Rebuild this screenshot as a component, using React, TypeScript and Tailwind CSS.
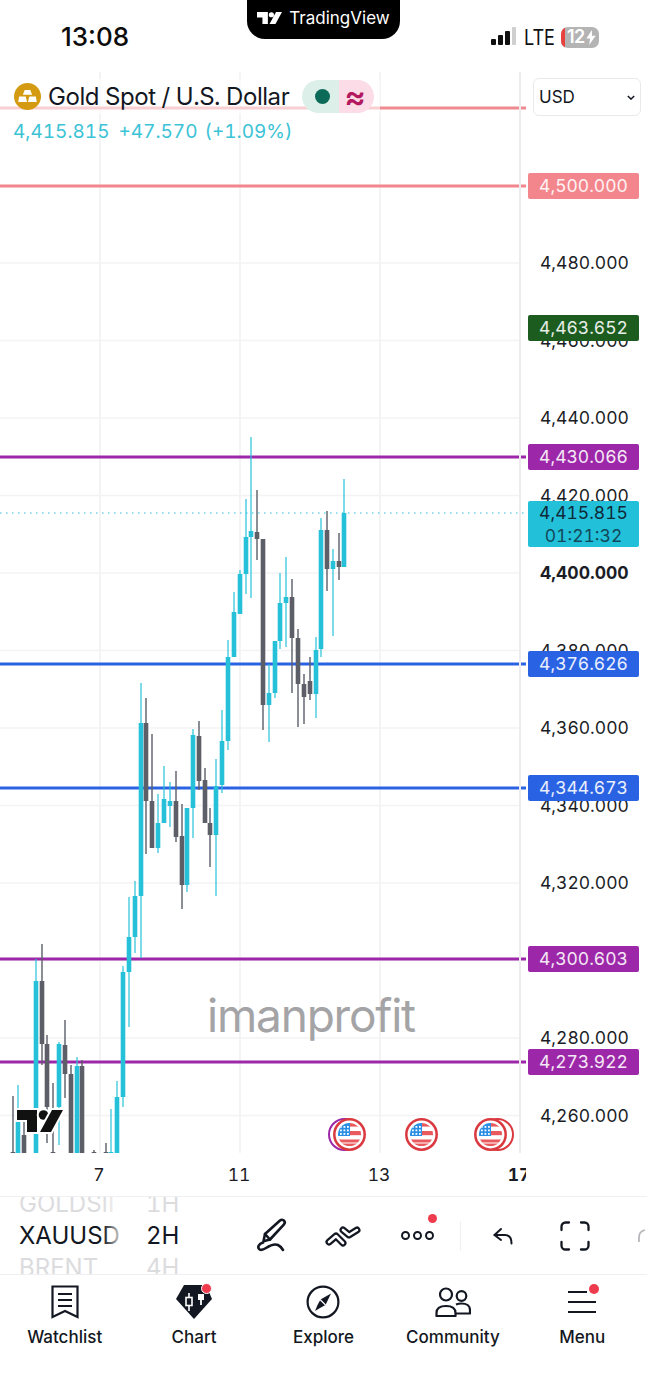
import type { ReactNode } from "react";

const FONT = { fontFamily: "Inter, 'Liberation Sans', sans-serif" };
const UP = "#26c1d9";
const DOWN = "#5c5e68";

// price -> page y, read off the axis labels
const priceY = (price: number) => 573 + (4400 - price) * 3.875;

// x, wick top, wick bottom, body top, body bottom, up?
const candles: [number, number, number, number, number, boolean][] = [
  [13, 1096, 1153, 1152, 1153, false],
  [18, 1085, 1153, 1122, 1153, true],
  [24, 1122, 1153, 1135, 1153, false],
  [36, 959, 1153, 981, 1153, true],
  [42, 944, 1065, 981, 1044, false],
  [47, 1035, 1143, 1044, 1107, false],
  [53, 1083, 1153, 1152, 1153, false],
  [59, 1042, 1145, 1044, 1107, true],
  [65, 1020, 1098, 1045, 1074, false],
  [71, 1065, 1153, 1074, 1153, false],
  [77, 1057, 1153, 1066, 1153, true],
  [82, 1060, 1153, 1066, 1153, false],
  [94, 1150, 1153, 1152, 1153, false],
  [106, 1143, 1153, 1152, 1153, false],
  [111, 1109, 1153, 1152, 1153, true],
  [117, 1081, 1153, 1097, 1153, true],
  [123, 966, 1107, 972, 1097, true],
  [129, 897, 1027, 937, 972, true],
  [135, 881, 953, 896, 937, true],
  [141, 683, 958, 723, 896, true],
  [146, 698, 854, 723, 801, false],
  [152, 734, 848, 801, 848, false],
  [158, 794, 853, 823, 848, true],
  [164, 766, 823, 799, 823, true],
  [170, 782, 827, 801, 806, true],
  [176, 771, 842, 801, 837, false],
  [182, 804, 909, 836, 885, false],
  [187, 808, 892, 808, 885, true],
  [193, 729, 838, 735, 808, true],
  [199, 721, 790, 736, 781, false],
  [205, 768, 823, 780, 823, false],
  [210, 808, 867, 823, 835, false],
  [216, 759, 896, 786, 835, true],
  [222, 710, 793, 741, 785, true],
  [228, 640, 750, 657, 741, true],
  [234, 592, 657, 612, 657, true],
  [240, 570, 614, 574, 614, true],
  [246, 499, 594, 537, 574, true],
  [251, 437, 598, 531, 537, true],
  [257, 490, 560, 532, 539, false],
  [263, 539, 730, 539, 705, false],
  [269, 664, 742, 693, 705, true],
  [275, 641, 698, 641, 693, true],
  [280, 573, 649, 603, 641, true],
  [286, 557, 647, 597, 603, true],
  [292, 579, 693, 597, 638, false],
  [298, 629, 727, 638, 684, false],
  [304, 674, 724, 684, 697, false],
  [310, 657, 700, 681, 694, false],
  [316, 637, 718, 650, 694, true],
  [321, 518, 657, 530, 649, true],
  [327, 511, 591, 530, 569, false],
  [333, 549, 636, 561, 569, true],
  [339, 533, 580, 561, 567, false],
  [344, 479, 567, 513, 567, true],
];

const levels = [
  { y: 186, color: "#f3868c" },
  { y: 457, color: "#9c27a8" },
  { y: 664, color: "#2a62e4" },
  { y: 788, color: "#2a62e4" },
  { y: 959, color: "#9c27a8" },
  { y: 1062, color: "#9c27a8" },
];

const axisPrices = [4480, 4460, 4440, 4420, 4400, 4380, 4360, 4340, 4320, 4280, 4260];

const tags = [
  { y: 186, text: "4,500.000", bg: "#f3868c" },
  { y: 328, text: "4,463.652", bg: "#1c5c1f" },
  { y: 457, text: "4,430.066", bg: "#9c27a8" },
  { y: 664, text: "4,376.626", bg: "#2a62e4" },
  { y: 788, text: "4,344.673", bg: "#2a62e4" },
  { y: 959, text: "4,300.603", bg: "#9c27a8" },
  { y: 1062, text: "4,273.922", bg: "#9c27a8" },
];

function Chart() {
  return (
    <svg width="526" height="1083" viewBox="0 70 526 1083" className="block">
      {[100, 240, 380].map((x) => (
        <line key={x} x1={x} x2={x} y1={72} y2={1153} stroke="#f1f1f2" strokeWidth="1.5" />
      ))}
      {axisPrices.concat(4500, 4300).map((p) => (
        <line key={p} x1={0} x2={520} y1={priceY(p)} y2={priceY(p)} stroke="#f3f3f4" strokeWidth="1.5" />
      ))}
      <line x1={0} x2={526} y1={513} y2={513} stroke={UP} strokeWidth="1.2" strokeDasharray="1.5 4.5" />
      {levels.map((l) => (
        <line key={l.y} x1={0} x2={526} y1={l.y} y2={l.y} stroke={l.color} strokeWidth="3" />
      ))}
      <line x1={0} x2={526} y1={108} y2={108} stroke="#ee8a90" strokeWidth="3" />
      {candles.map(([x, wt, wb, bt, bb, up]) => (
        <g key={x} fill={up ? UP : DOWN}>
          <rect x={x - 0.7} y={wt} width={1.4} height={wb - wt} opacity={up ? 0.85 : 1} />
          <rect x={x - 2.3} y={bt} width={4.6} height={bb - bt} />
        </g>
      ))}
    </svg>
  );
}

function TvLogo({ className, fill, halo }: { className: string; fill: string; halo?: boolean }) {
  return (
    <svg
      viewBox="0 0 46 22"
      className={`overflow-visible ${className}`}
      fill={fill}
      stroke={halo ? "#fff" : "none"}
      strokeWidth={halo ? 4 : 0}
      paintOrder="stroke"
    >
      <path d="M0 0H20V22H10V10H0Z" />
      <circle cx="26.5" cy="5" r="4.8" />
      <path d="M35 0H46L34 22H23Z" />
    </svg>
  );
}

function FlagBadge({ ring }: { ring?: "left" | "right" }) {
  return (
    <div className="relative h-[33px] w-[33px]">
      {ring === "left" && (
        <div className="absolute -left-[5px] top-0 h-[33px] w-[33px] rounded-full border-[2.5px] border-[#9c27a8]" />
      )}
      {ring === "right" && (
        <div className="absolute left-[7px] top-0 h-[33px] w-[33px] rounded-full border-[2.5px] border-[#d9393f] bg-white" />
      )}
      <svg viewBox="0 0 33 33" className="absolute inset-0 h-[33px] w-[33px]">
        <circle cx="16.5" cy="16.5" r="15.2" fill="#fff" stroke="#d9393f" strokeWidth="2.5" />
        <clipPath id="flag-clip">
          <circle cx="16.5" cy="16.5" r="11.5" />
        </clipPath>
        <g clipPath="url(#flag-clip)">
          <rect x="4" y="5" width="26" height="24" fill="#fff" />
          <rect x="16" y="5" width="14" height="3.6" fill="#e95a5e" />
          <rect x="16" y="13" width="14" height="4.2" fill="#e95a5e" />
          <rect x="4" y="21.5" width="26" height="3" fill="#e95a5e" />
          <rect x="4" y="25.5" width="26" height="4" fill="#e95a5e" />
          <rect x="4" y="5" width="13" height="13" fill="#2b8fe6" />
          {[7, 10.5, 14].map((x) =>
            [8, 11.5, 15].map((y) => <rect key={`${x}-${y}`} x={x} y={y} width="1.8" height="1.8" fill="#fff" />)
          )}
        </g>
      </svg>
    </div>
  );
}

function RedDot({ className }: { className: string }) {
  return <span className={`absolute rounded-full bg-[#ee3b4d] ${className}`} />;
}

function TabItem({ label, icon }: { label: string; icon: ReactNode }) {
  return (
    <div className="flex flex-col items-center pt-[9px]">
      <div className="relative flex h-[36px] w-[40px] items-center justify-center">{icon}</div>
      <span className="mt-[7px] text-[17px] leading-[20px] font-medium text-[#131722]">{label}</span>
    </div>
  );
}

export default function App() {
  return (
    <div className="flex h-[1400px] w-[647px] flex-col overflow-hidden bg-white tabular-nums" style={FONT}>
      {/* status bar */}
      <div className="relative h-[70px] shrink-0">
        <span className="absolute left-[61px] top-[20px] text-[26px] leading-[34px] font-medium text-[#0c0c0c] normal-nums">13:08</span>
        <div className="absolute left-[247px] top-0 flex h-[39px] w-[153px] items-center justify-center gap-[7px] rounded-b-[18px] bg-black pb-[3px]">
          <TvLogo className="h-[12px] w-[25px]" fill="#fff" />
          <span className="text-[17px] leading-none text-white">TradingView</span>
        </div>
        <div className="absolute left-[491px] top-[25px] flex items-center">
          <div className="flex h-[20px] items-end gap-[2px] pb-[2px]">
            <span className="h-[6px] w-[5px] rounded-[1px] bg-[#111]" />
            <span className="h-[10px] w-[5px] rounded-[1px] bg-[#111]" />
            <span className="h-[14px] w-[5px] rounded-[1px] bg-[#111]" />
            <span className="h-[18px] w-[4px] rounded-[1px] bg-[#cfcfcf]" />
          </div>
          <span className="ml-[8px] w-[37px] text-[22px] leading-[24px] text-[#111]" style={{ transform: "scaleX(0.82)", transformOrigin: "left" }}>LTE</span>
          <div className="flex h-[21px] w-[38px] items-center overflow-hidden rounded-[7px] bg-[#b4b4b4]">
            <span className="h-full w-[4px] bg-[#e8423f]" />
            <span className="ml-[2px] text-[18px] leading-none font-semibold text-white normal-nums" style={{ letterSpacing: "-0.5px" }}>12</span>
            <svg viewBox="0 0 10 16" className="ml-[1px] h-[15px] w-[10px]" fill="#fff">
              <path d="M6 0 0 9h4l-1 7 7-10H6Z" />
            </svg>
          </div>
        </div>
      </div>

      {/* chart */}
      <div className="relative flex h-[1083px] shrink-0">
        <div className="w-[520px] shrink-0 overflow-visible">
          <Chart />
        </div>
        <div className="absolute left-[519px] top-[2px] bottom-0 w-[2px] bg-[#ececee]" />

        <div className="relative w-[127px] shrink-0">
          <div className="absolute left-[13px] top-[8px] flex h-[38px] w-[108px] items-center justify-between rounded-[6px] border border-[#e9e9ec] bg-white pl-[5px] pr-[5px]">
            <span className="text-[17px] leading-none text-[#131722]">USD</span>
            <svg viewBox="0 0 10 6" className="h-[5px] w-[8px]" fill="none" stroke="#131722" strokeWidth="1.8">
              <path d="m1 1 4 4 4-4" />
            </svg>
          </div>

          {axisPrices.map((p) => (
            <span
              key={p}
              className={`absolute left-[20px] text-[17.5px] leading-[24px] text-[#1a1d26] ${p === 4400 ? "font-bold" : ""}`}
              style={{ top: priceY(p) - 70 - 12 }}
            >
              {p.toLocaleString("en-US")}.000
            </span>
          ))}

          {tags.map((t) => (
            <div
              key={t.y}
              className="absolute left-[8px] flex h-[26px] w-[111px] items-center justify-center rounded-[2px] text-[17.5px] leading-none text-white/90"
              style={{ top: t.y - 70 - 13, backgroundColor: t.bg }}
            >
              {t.text}
            </div>
          ))}

          <div className="absolute left-[8px] top-[431px] flex h-[46px] w-[111px] flex-col items-center justify-center rounded-[2px] bg-[#22c1d9] text-[17.5px] leading-[23px] text-[#0f2a3a]">
            <span>4,415.815</span>
            <span className="opacity-80">01:21:32</span>
          </div>
        </div>

        {/* legend over the chart */}
        <div className="absolute left-0 top-[9px] flex h-[35px] w-[380px] items-center bg-white/60 pl-[14px]">
          <div className="flex h-[27px] w-[27px] items-center justify-center rounded-full bg-[#d49b12]">
            <svg viewBox="0 0 20 14" className="h-[13px] w-[19px]" fill="#fff">
              <path d="M7 0h6l2 5H5ZM1 7h7l1.5 6H0ZM12 7h7l1 6H10.5Z" />
            </svg>
          </div>
          <span className="ml-[7px] text-[24px] leading-[30px] text-[#131722]" style={{ letterSpacing: "-0.45px" }}>Gold Spot / U.S. Dollar</span>
          <div className="ml-[13px] flex h-[33px] w-[72px] overflow-hidden rounded-full">
            <div className="flex w-[37px] items-center justify-center bg-[#dcefe9] pl-[4px]">
              <span className="h-[15px] w-[15px] rounded-full bg-[#0b6b58]" />
            </div>
            <div className="flex flex-1 items-center justify-center bg-[#fbdce7] pr-[3px] text-[32px] leading-[33px] font-semibold text-[#b3195f]">≈</div>
          </div>
        </div>
        <div className="absolute left-[13px] top-[50px] flex gap-[9px] text-[19px] leading-[24px] text-[#3cc3d6]">
          <span>4,415.815</span>
          <span className="flex gap-[7px]">
            <span>+47.570</span>
            <span>(+1.09%)</span>
          </span>
        </div>

        <span className="absolute left-[207px] top-[917px] text-[46px] leading-[56px] text-[#a4a4a6]" style={{ letterSpacing: "-1.2px" }}>imanprofit</span>

        <div className="absolute left-[333px] top-[1048px] flex gap-[39px]">
          <FlagBadge ring="left" />
          <FlagBadge />
          <div className="ml-[-3px]">
            <FlagBadge ring="right" />
          </div>
        </div>

        <div className="absolute left-[17px] top-[1040px]">
          <TvLogo className="block h-[22px] w-[46px]" fill="#111" halo />
        </div>
      </div>

      {/* time axis */}
      <div className="h-[43px] w-[526px] shrink-0 overflow-hidden">
        <div className="flex h-full w-[700px] pl-[29px] pt-[11px] text-[17.5px] leading-[22px] text-[#1a1d26]">
          <span className="w-[140px] text-center">7</span>
          <span className="w-[140px] text-center">11</span>
          <span className="w-[140px] text-center">13</span>
          <span className="w-[140px] text-center font-bold">17</span>
        </div>
      </div>

      {/* drawing toolbar */}
      <div className="relative flex h-[79px] shrink-0 items-center overflow-hidden border-y border-[#f0f0f2]">
        <div className="relative ml-[19px] flex h-full w-[106px] flex-col justify-center overflow-hidden pt-[1px] text-[24px] leading-[32px]">
          <span className="text-[#dcdcde]">GOLDSII</span>
          <span className="text-[#131722]">XAUUSD</span>
          <span className="text-[#dcdcde]">BRENT</span>
          <div className="absolute inset-y-0 right-0 w-[22px] bg-gradient-to-r from-white/0 to-white" />
        </div>
        <div className="ml-[21px] flex h-full flex-col justify-center pt-[1px] text-[24px] leading-[32px]">
          <span className="text-[#dcdcde]">1H</span>
          <span className="text-[#131722]">2H</span>
          <span className="text-[#dcdcde]">4H</span>
        </div>

        <svg viewBox="0 0 32 36" className="ml-[78px] h-[36px] w-[32px]" fill="none" stroke="#131722" strokeWidth="2.6" strokeLinecap="round" strokeLinejoin="round">
          <path d="M8 16 23 2.5c1.3-1.1 3-1 4 .2s1 2.7-.2 3.9L13 21.5l-6.5 1.7Z" />
          <path d="m8 16 5 5.5" />
          <path d="M6 24.5C1.5 26 .5 29 2 31c1.6 1.8 4 .9 7-1 4-2.6 8.5-4.6 12-3 2 .9 3.5 2.5 5 5" />
        </svg>

        {/* outlined chevrons: dark stroke with a white core */}
        <svg viewBox="0 0 38 26" className="ml-[35px] h-[26px] w-[38px]" fill="none" strokeLinecap="round" strokeLinejoin="round">
          <path d="M5 19 12 13 19 20M19 7 25 12 33 7" stroke="#131722" strokeWidth="7" />
          <path d="M5 19 12 13 19 20M19 7 25 12 33 7" stroke="#fff" strokeWidth="2.6" />
        </svg>

        <div className="relative ml-[39px] flex w-[33px] items-center justify-between">
          {[0, 1, 2].map((i) => (
            <span key={i} className="h-[9px] w-[9px] rounded-full border-[2.2px] border-[#131722]" />
          ))}
          <RedDot className="-top-[17px] right-[-3px] h-[9px] w-[9px]" />
        </div>

        <div className="ml-[26px] h-[30px] w-px bg-[#f0f0f2]" />

        <svg viewBox="0 0 20 18" className="ml-[32px] h-[18px] w-[20px]" fill="none" stroke="#131722" strokeWidth="2" strokeLinecap="round" strokeLinejoin="round">
          <path d="M8 2 1.5 8 8 13" />
          <path d="M1.5 8H12c4 0 6.5 3 6.5 8.5" />
        </svg>

        <svg viewBox="0 0 30 30" className="ml-[47px] h-[30px] w-[30px]" fill="none" stroke="#131722" strokeWidth="2.3" strokeLinecap="round">
          <path d="M1.5 9V5.5a4 4 0 0 1 4-4H9M21 1.5h3.5a4 4 0 0 1 4 4V9M28.5 21v3.5a4 4 0 0 1-4 4H21M9 28.5H5.5a4 4 0 0 1-4-4V21" />
        </svg>

        <svg viewBox="0 0 8 14" className="ml-[48px] h-[14px] w-[8px] shrink-0" fill="none" stroke="#b8b8bc" strokeWidth="1.8">
          <path d="M1 13V8c0-3 2-6 6-7" />
        </svg>
      </div>

      {/* bottom tabs */}
      <div className="grid flex-1 grid-cols-5">
        <TabItem
          label="Watchlist"
          icon={
            <svg viewBox="0 0 28 34" className="h-[34px] w-[28px]" fill="none" stroke="#131722" strokeWidth="2.2">
              <path d="M1.5 1.5h25V32L14 26 1.5 32Z" />
              <path d="M7 9h14M7 15h14M7 21h14" />
            </svg>
          }
        />
        <TabItem
          label="Chart"
          icon={
            <>
              <svg viewBox="0 0 36 34" className="h-[34px] w-[36px]">
                <path d="M8 0h22l6 14-18 20L0 14Z" fill="#131722" />
                <path d="M13 8v18" stroke="#fff" strokeWidth="1.6" fill="none" />
                <rect x="10" y="12.5" width="6" height="8" fill="#131722" stroke="#fff" strokeWidth="1.6" />
                <path d="M25 10v10" stroke="#fff" strokeWidth="1.8" fill="none" />
                <rect x="22" y="9" width="6" height="6" fill="#fff" />
              </svg>
              <RedDot className="right-[2px] top-[-1px] h-[11px] w-[11px] border border-white" />
            </>
          }
        />
        <TabItem
          label="Explore"
          icon={
            <svg viewBox="0 0 34 34" className="h-[34px] w-[34px]" fill="none" stroke="#131722" strokeWidth="2.2">
              <circle cx="17" cy="17" r="15.4" />
              <path d="M25 8.5 19.5 20l-5.5 3-5 3 2.5-6 3-5.5Z" fill="#131722" stroke="none" />
              <path d="m14 14.5 5.5 5.5" stroke="#fff" strokeWidth="1.2" />
            </svg>
          }
        />
        <TabItem
          label="Community"
          icon={
            <svg viewBox="0 0 36 30" className="h-[30px] w-[36px]" fill="none" stroke="#131722" strokeWidth="2.2" strokeLinejoin="round">
              <circle cx="11" cy="7.5" r="6" />
              <circle cx="26.5" cy="9" r="4.8" />
              <path d="M1.5 29v-3c0-4.5 3.5-7 9.5-7s9.5 2.5 9.5 7v3Z" />
              <path d="M21 17.5c1.5-.6 3.3-1 5.5-1 5 0 8.5 2.3 8.5 6.5v3.5H20.5" />
            </svg>
          }
        />
        <TabItem
          label="Menu"
          icon={
            <>
              <svg viewBox="0 0 30 26" className="h-[26px] w-[30px]" fill="none" stroke="#131722" strokeWidth="2.2">
                <path d="M1 3h19M1 13h28M1 23h28" />
              </svg>
              <RedDot className="right-[3px] top-[0px] h-[10px] w-[10px]" />
            </>
          }
        />
      </div>
    </div>
  );
}
